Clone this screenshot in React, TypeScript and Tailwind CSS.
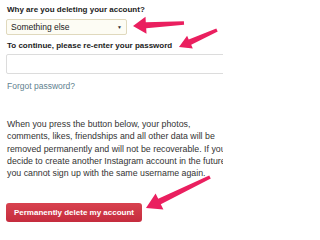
import React from 'react';

type Pt = [number, number];

// Flèche rose dessinée : tige effilée + grosse pointe
function arrowPoints(tail: Pt, tip: Pt, headLen: number, headW: number, tailW: number, neckW: number) {
  const dx = tip[0] - tail[0];
  const dy = tip[1] - tail[1];
  const len = Math.hypot(dx, dy);
  const ux = dx / len;
  const uy = dy / len;
  const nx = -uy;
  const ny = ux;
  const bx = tip[0] - ux * headLen;
  const by = tip[1] - uy * headLen;
  const p = (x: number, y: number) => `${x.toFixed(1)},${y.toFixed(1)}`;
  return [
    p(tail[0] + nx * tailW / 2, tail[1] + ny * tailW / 2),
    p(bx + nx * neckW / 2, by + ny * neckW / 2),
    p(bx + nx * headW / 2, by + ny * headW / 2),
    p(tip[0], tip[1]),
    p(bx - nx * headW / 2, by - ny * headW / 2),
    p(bx - nx * neckW / 2, by - ny * neckW / 2),
    p(tail[0] - nx * tailW / 2, tail[1] - ny * tailW / 2),
  ].join(' ');
}

const arrows: { tail: Pt; tip: Pt; headLen: number; headW: number }[] = [
  { tail: [184, 23], tip: [133, 26], headLen: 13, headW: 17 },
  { tail: [217, 30], tip: [179, 47], headLen: 12, headW: 14 },
  { tail: [210, 177], tip: [146, 208], headLen: 15, headW: 18 },
];

export default function App() {
  return (
    <div className="relative w-[223px] h-[226px] overflow-hidden bg-white font-['Liberation_Sans','Arial',sans-serif] text-[#262626]">
      <div className="w-[260px] px-[6px] pt-[5px]">
        <label className="block pl-px whitespace-nowrap text-[8px] leading-[10px] font-bold text-[#1c1c1c]">
          Why are you deleting your account?
        </label>
        <div className="mt-[4px] flex h-[16px] w-[121px] items-center justify-between rounded-[2px] border border-[#e0d9bd] bg-[#fdfcf4] pl-[4px] pr-[4px]">
          <span className="text-[8.5px] leading-none text-[#222]">Something else</span>
          <span className="text-[5px] leading-none text-[#333]">▼</span>
        </div>

        <label className="mt-[6px] block pl-px whitespace-nowrap text-[8px] leading-[10px] font-bold text-[#1c1c1c]">
          To continue, please re-enter your password
        </label>
        <div className="mt-[3px] h-[20px] w-full rounded-[2px] border border-[#dcdcdc] bg-white" />

        <a className="mt-[7px] block pl-px text-[8.5px] leading-[11px] text-[#5f7f8f]">Forgot password?</a>

        <p className="mt-[26px] pl-px whitespace-nowrap text-[8.8px] leading-[12.3px] text-[#333]">
          When you press the button below, your photos,
          <br />
          comments, likes, friendships and all other data will be
          <br />
          removed permanently and will not be recoverable. If you
          <br />
          decide to create another Instagram account in the future
          <br />
          you cannot sign up with the same username again.
        </p>

        <button className="mt-[24px] h-[19px] w-[136px] rounded-[3px] bg-gradient-to-b from-[#d8424f] to-[#c52c3e] text-[8px] leading-none font-bold text-white">
          Permanently delete my account
        </button>
      </div>

      <svg className="pointer-events-none absolute inset-0" width="223" height="226" viewBox="0 0 223 226">
        {arrows.map((a, i) => (
          <polygon key={i} points={arrowPoints(a.tail, a.tip, a.headLen, a.headW, 3.5, 6)} fill="#ea1f5f" />
        ))}
      </svg>
    </div>
  );
}
